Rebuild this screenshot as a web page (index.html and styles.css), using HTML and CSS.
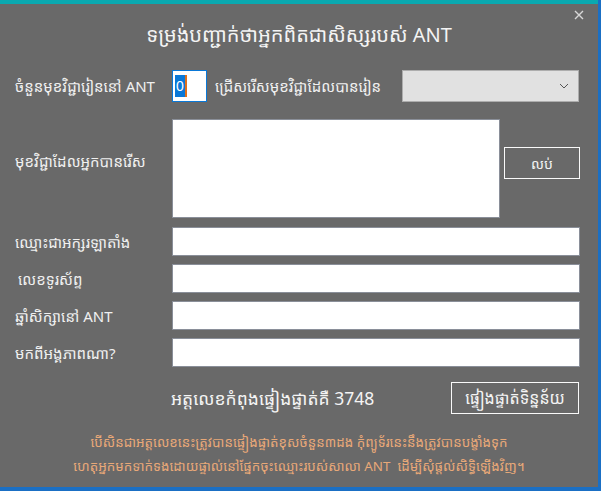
FILE: index.html
```html
<!DOCTYPE html>
<html lang="km">
<head>
<meta charset="utf-8">
<title>ANT</title>
<link rel="stylesheet" href="styles.css">
</head>
<body>
<div class="desktop">
  <div class="dialog">
    <div class="topbar"></div>
    <button class="close" aria-label="close">
      <svg width="10" height="10" viewBox="0 0 10 10"><path d="M1 1L9 9M9 1L1 9" stroke="#d8d8d8" stroke-width="1.4"/></svg>
    </button>
    <h1 class="title">ទម្រង់បញ្ជាក់ថាអ្នកពិតជាសិស្សរបស់ ANT</h1>
    <div class="row row-first">
      <span class="label">ចំនួនមុខវិជ្ជារៀននៅ ANT</span>
      <div class="numbox"><span class="sel">0</span><span class="caret"></span></div>
      <span class="label label2">ជ្រើសរើសមុខវិជ្ជាដែលបានរៀន</span>
      <div class="select">
        <svg width="10" height="6" viewBox="0 0 10 6"><path d="M1 1L5 5L9 1" fill="none" stroke="#555" stroke-width="1"/></svg>
      </div>
    </div>
    <div class="row row-subjects">
      <span class="label">មុខវិជ្ជាដែលអ្នកបានរើស</span>
      <div class="textarea"></div>
      <button class="btn btn-del">លប់</button>
    </div>
    <div class="fields">
      <div class="row field"><span class="label">ឈ្មោះជាអក្សរឡាតាំង</span><div class="input"></div></div>
      <div class="row field"><span class="label ind">លេខទូរស័ព្ទ</span><div class="input"></div></div>
      <div class="row field"><span class="label">ឆ្នាំសិក្សានៅ ANT</span><div class="input"></div></div>
      <div class="row field"><span class="label">មកពីអង្គភាពណា?</span><div class="input"></div></div>
    </div>
    <div class="row verify">
      <span class="code">អត្តលេខកំពុងផ្ទៀងផ្ទាត់គឺ 3748</span>
      <button class="btn btn-verify">ផ្ទៀងផ្ទាត់ទិន្នន័យ</button>
    </div>
    <p class="warn">បើសិនជាអត្តលេខនេះត្រូវបានផ្ទៀងផ្ទាត់ខុសចំនួន៣ដង កុំព្យូទ័រនេះនឹងត្រូវបានបង្ខាំងទុក<br>ហេតុអ្នកមកទាក់ទងដោយផ្ទាល់នៅផ្នែកចុះឈ្មោះរបស់សាលា ANT&nbsp; ដើម្បីសុំផ្តល់សិទ្ធិឡើងវិញ។</p>
  </div>
</div>
</body>
</html>
```
FILE: styles.css
```css
* { box-sizing: border-box; }
html, body { margin: 0; padding: 0; }
body {
  width: 601px; height: 491px; overflow: hidden;
  background: #1a6fc4;
  font-family: "Khmer OS System", "Khmer OS", "Noto Sans Khmer", "Noto Serif Khmer", "Liberation Sans", sans-serif;
  color: #f2f2f2;
}
.desktop { width: 601px; height: 491px; position: relative; }
.dialog {
  width: 598px; height: 487px;
  background: #696969;
  position: relative;
  display: flex; flex-direction: column;
}
.topbar { height: 4px; background: #0aa9b0; flex: none; }
.close {
  position: absolute; top: 10px; right: 14px;
  background: none; border: 0; padding: 0; width: 10px; height: 10px; display: block;
}
.close svg { display: block; }
.title {
  margin: 15px 0 0; font-weight: normal; font-size: 20px; line-height: 32px;
  text-align: center; color: #f4f4f4; height: 32px;
}
.row { display: flex; align-items: center; }
.label { font-size: 15px; color: #f0f0f0; white-space: nowrap; }
.row-first { margin-top: 19px; padding-left: 15px; height: 32px; }
.row-first .label:first-child { width: 157px; }
.numbox {
  width: 35px; height: 32px; background: #fff; border: 1px solid #0a78d7;
  display: flex; align-items: center; padding-left: 2px;
}
.numbox .sel { background: #0a78d7; color: #fff; font-size: 14px; line-height: 22px; padding: 0 1px; font-family: "Liberation Sans", sans-serif; }
.numbox .caret { width: 2px; height: 22px; background: #e0701a; }
.label2 { margin-left: 8px; width: 187px; }
.select {
  width: 177px; height: 32px; background: #e1e1e1; border: 1px solid #adadad;
  display: flex; align-items: center; justify-content: flex-end; padding-right: 9px;
}
.select svg { display: block; }
.row-subjects { margin-top: 17px; padding-left: 15px; height: 99px; align-items: flex-start; }
.row-subjects .label { width: 157px; line-height: 24px; margin-top: 30px; }
.textarea { width: 328px; height: 99px; background: #fff; border: 1px solid #8a8f99; }
.btn {
  background: transparent; border: 1px solid #fafafa; color: #f4f4f4;
  font-family: inherit; font-size: 14px; padding: 0;
}
.btn-del { width: 76px; height: 32px; margin-left: 4px; margin-top: 28px; }
.fields { margin-top: 9px; display: flex; flex-direction: column; gap: 8px; padding-left: 15px; }
.field { height: 29px; }
.field .label { width: 157px; }
.label.ind { padding-left: 3px; }
.input { width: 408px; height: 29px; background: #fff; border: 1px solid #8a8f99; }
.verify { margin-top: 15px; padding-left: 171px; height: 32px; }
.code { font-size: 17.5px; color: #f4f4f4; white-space: nowrap; flex: 1; }
.btn-verify { width: 128px; height: 32px; margin-right: 19px; font-size: 16px; }
.warn {
  margin: 16px 0 0; text-align: center; color: #e8a878; font-size: 13.4px; line-height: 24px;
}
```
